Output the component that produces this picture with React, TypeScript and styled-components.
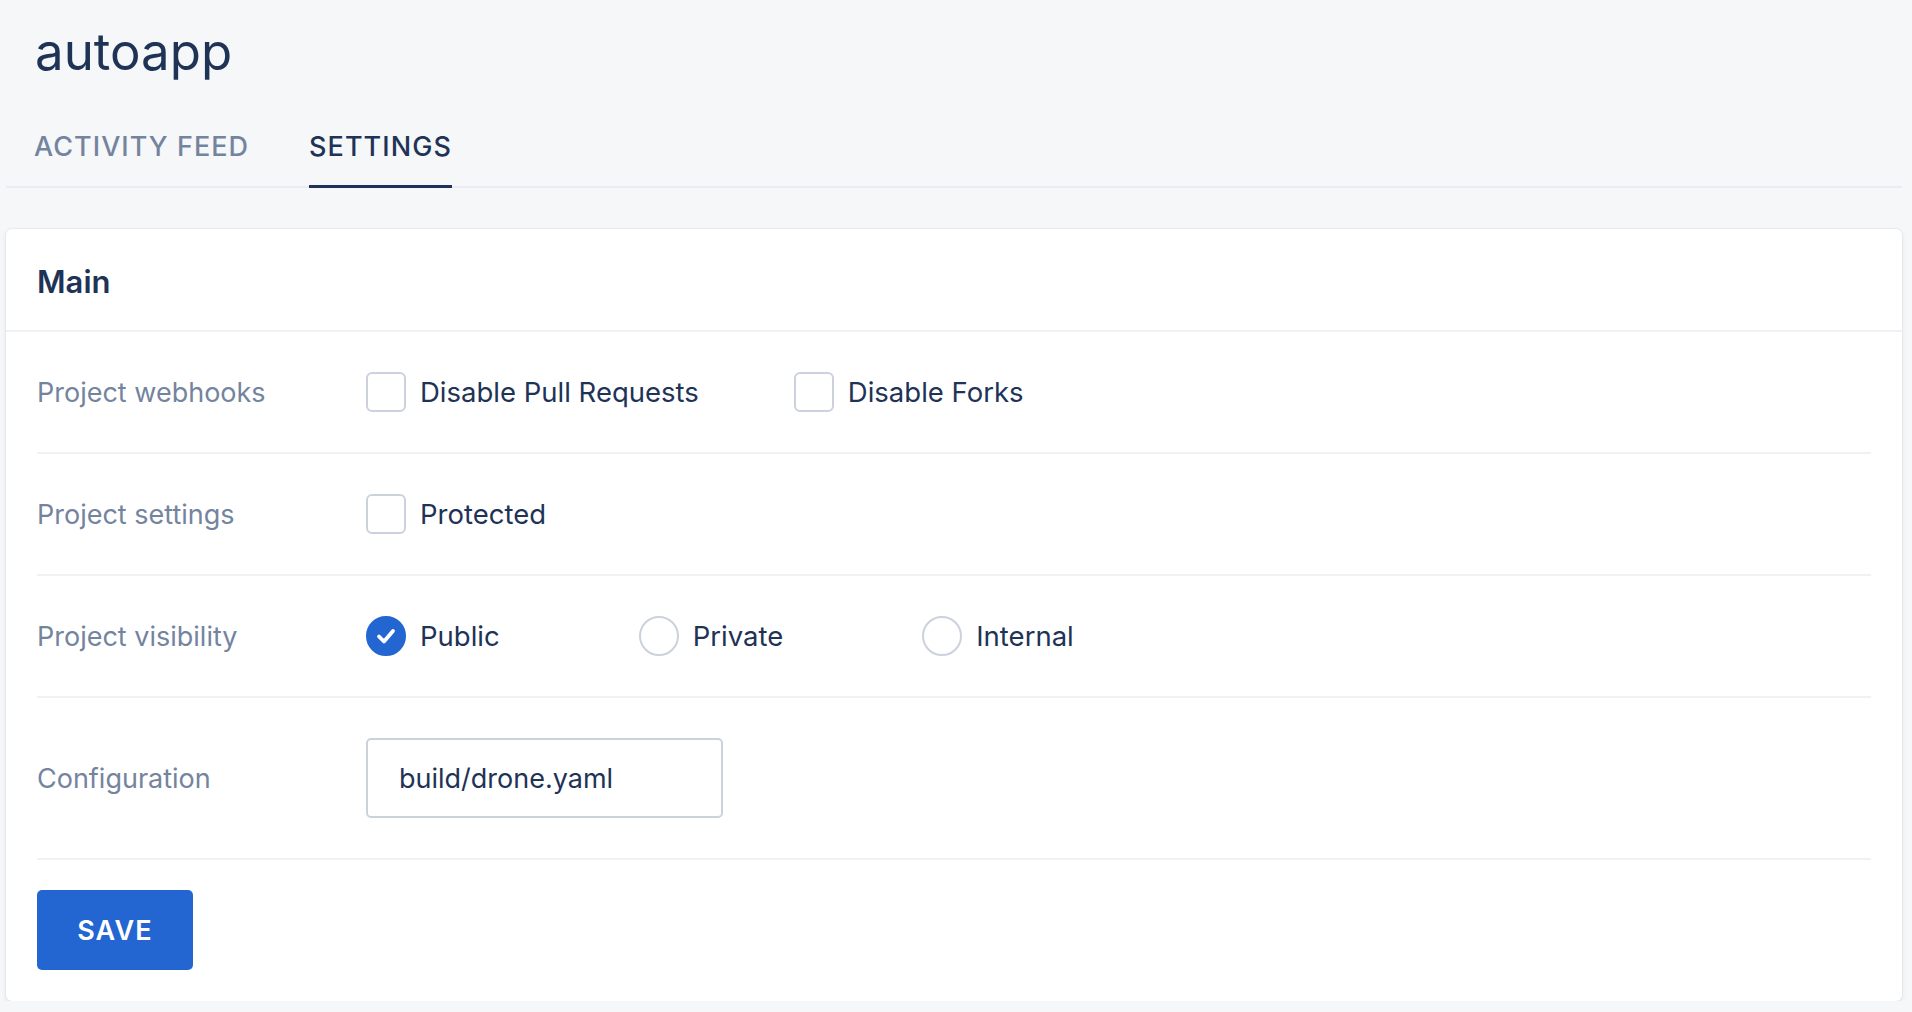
import styled, { createGlobalStyle } from "styled-components";
import { useState } from "react";

const NAVY = "#1e3356";
const MUTED = "#74849e";
const BLUE = "#2366d1";
const LINE = "#eff1f5";
const CONTROL_BORDER = "#cbd2dd";

const GlobalStyle = createGlobalStyle`
  html, body {
    margin: 0;
    padding: 0;
    background: #f5f7f9;
    font-family: Inter, "Noto Sans", sans-serif;
    color: ${NAVY};
  }
  * {
    box-sizing: border-box;
  }
`;

const Page = styled.div`
  padding: 22px 10px 0 6px;
`;

const Title = styled.h1`
  margin: 0 0 49px 29px;
  font-size: 51px;
  line-height: 60px;
  font-weight: 400;
  color: ${NAVY};
`;

const TabBar = styled.nav`
  display: flex;
  gap: 60px;
  padding-left: 28px;
  border-bottom: 2px solid #e9ecf0;
`;

const Tab = styled.div<{ $active?: boolean }>`
  font-size: 27px;
  line-height: 32px;
  font-weight: 500;
  letter-spacing: 1.05px;
  text-transform: uppercase;
  padding-bottom: 22px;
  margin-bottom: -2px;
  color: ${(p) => (p.$active ? NAVY : MUTED)};
  border-bottom: 3px solid ${(p) => (p.$active ? NAVY : "transparent")};
  cursor: pointer;
`;

const Card = styled.section`
  margin-top: 41px;
  background: #fff;
  border-radius: 6px;
  box-shadow: 0 0 0 1px rgba(20, 30, 60, 0.04), 0 2px 6px rgba(20, 30, 60, 0.07);
`;

const CardHeader = styled.header`
  padding: 35px 31px 30px;
  border-bottom: 2px solid ${LINE};
  font-size: 31px;
  line-height: 36px;
  font-weight: 600;
  color: ${NAVY};
`;

const CardBody = styled.div`
  padding: 0 31px 31px;
`;

const Row = styled.div`
  display: flex;
  align-items: center;
  padding: 40px 0;
  border-bottom: 2px solid ${LINE};
`;

const Label = styled.div`
  width: 329px;
  flex-shrink: 0;
  font-size: 27px;
  color: ${MUTED};
`;

const Options = styled.div<{ $spacing: number }>`
  display: flex;
  align-items: center;
  gap: ${(p) => p.$spacing}px;
`;

const Option = styled.label`
  display: flex;
  align-items: center;
  gap: 14px;
  font-size: 27.5px;
  color: ${NAVY};
  cursor: pointer;
`;

const Box = styled.span<{ $round?: boolean; $checked?: boolean }>`
  width: 40px;
  height: 40px;
  display: inline-flex;
  align-items: center;
  justify-content: center;
  border-radius: ${(p) => (p.$round ? "50%" : "6px")};
  border: 2px solid ${(p) => (p.$checked ? BLUE : CONTROL_BORDER)};
  background: ${(p) => (p.$checked ? BLUE : "#fff")};
`;

const TextInput = styled.input`
  width: 357px;
  height: 80px;
  padding: 0 0 0 31px;
  border: 2px solid ${CONTROL_BORDER};
  border-radius: 5px;
  font-family: inherit;
  font-size: 27px;
  color: ${NAVY};
  outline: none;
`;

const Footer = styled.div`
  padding-top: 30px;
`;

const SaveButton = styled.button`
  width: 156px;
  height: 80px;
  border: none;
  border-radius: 5px;
  background: ${BLUE};
  color: #fff;
  font-family: inherit;
  font-size: 27px;
  font-weight: 600;
  letter-spacing: 1.2px;
  cursor: pointer;
`;

const Check = () => (
  <svg width="22" height="22" viewBox="0 0 22 22" fill="none">
    <polyline
      points="4,11.5 9,16.5 18,6"
      stroke="#fff"
      strokeWidth="3.8"
      strokeLinecap="round"
      strokeLinejoin="round"
    />
  </svg>
);

const Checkbox = ({ label, checked, onToggle }: { label: string; checked: boolean; onToggle: () => void }) => (
  <Option onClick={onToggle}>
    <Box $checked={checked}>{checked && <Check />}</Box>
    {label}
  </Option>
);

const Radio = ({ label, checked, onSelect }: { label: string; checked: boolean; onSelect: () => void }) => (
  <Option onClick={onSelect}>
    <Box $round $checked={checked}>{checked && <Check />}</Box>
    {label}
  </Option>
);

const App = () => {
  const [tab, setTab] = useState("settings");
  const [flags, setFlags] = useState({ pulls: false, forks: false, protected: false });
  const [visibility, setVisibility] = useState("public");
  const [config, setConfig] = useState("build/drone.yaml");

  const toggle = (key: keyof typeof flags) => setFlags({ ...flags, [key]: !flags[key] });

  return (
    <Page>
      <GlobalStyle />
      <Title>autoapp</Title>
      <TabBar>
        <Tab $active={tab === "feed"} onClick={() => setTab("feed")}>Activity Feed</Tab>
        <Tab $active={tab === "settings"} onClick={() => setTab("settings")}>Settings</Tab>
      </TabBar>
      <Card>
        <CardHeader>Main</CardHeader>
        <CardBody>
          <Row>
            <Label>Project webhooks</Label>
            <Options $spacing={95}>
              <Checkbox label="Disable Pull Requests" checked={flags.pulls} onToggle={() => toggle("pulls")} />
              <Checkbox label="Disable Forks" checked={flags.forks} onToggle={() => toggle("forks")} />
            </Options>
          </Row>
          <Row>
            <Label>Project settings</Label>
            <Options $spacing={95}>
              <Checkbox label="Protected" checked={flags.protected} onToggle={() => toggle("protected")} />
            </Options>
          </Row>
          <Row>
            <Label>Project visibility</Label>
            <Options $spacing={139}>
              {["Public", "Private", "Internal"].map((v) => (
                <Radio
                  key={v}
                  label={v}
                  checked={visibility === v.toLowerCase()}
                  onSelect={() => setVisibility(v.toLowerCase())}
                />
              ))}
            </Options>
          </Row>
          <Row>
            <Label>Configuration</Label>
            <TextInput value={config} onChange={(e) => setConfig(e.target.value)} />
          </Row>
          <Footer>
            <SaveButton>SAVE</SaveButton>
          </Footer>
        </CardBody>
      </Card>
    </Page>
  );
};

export default App;
